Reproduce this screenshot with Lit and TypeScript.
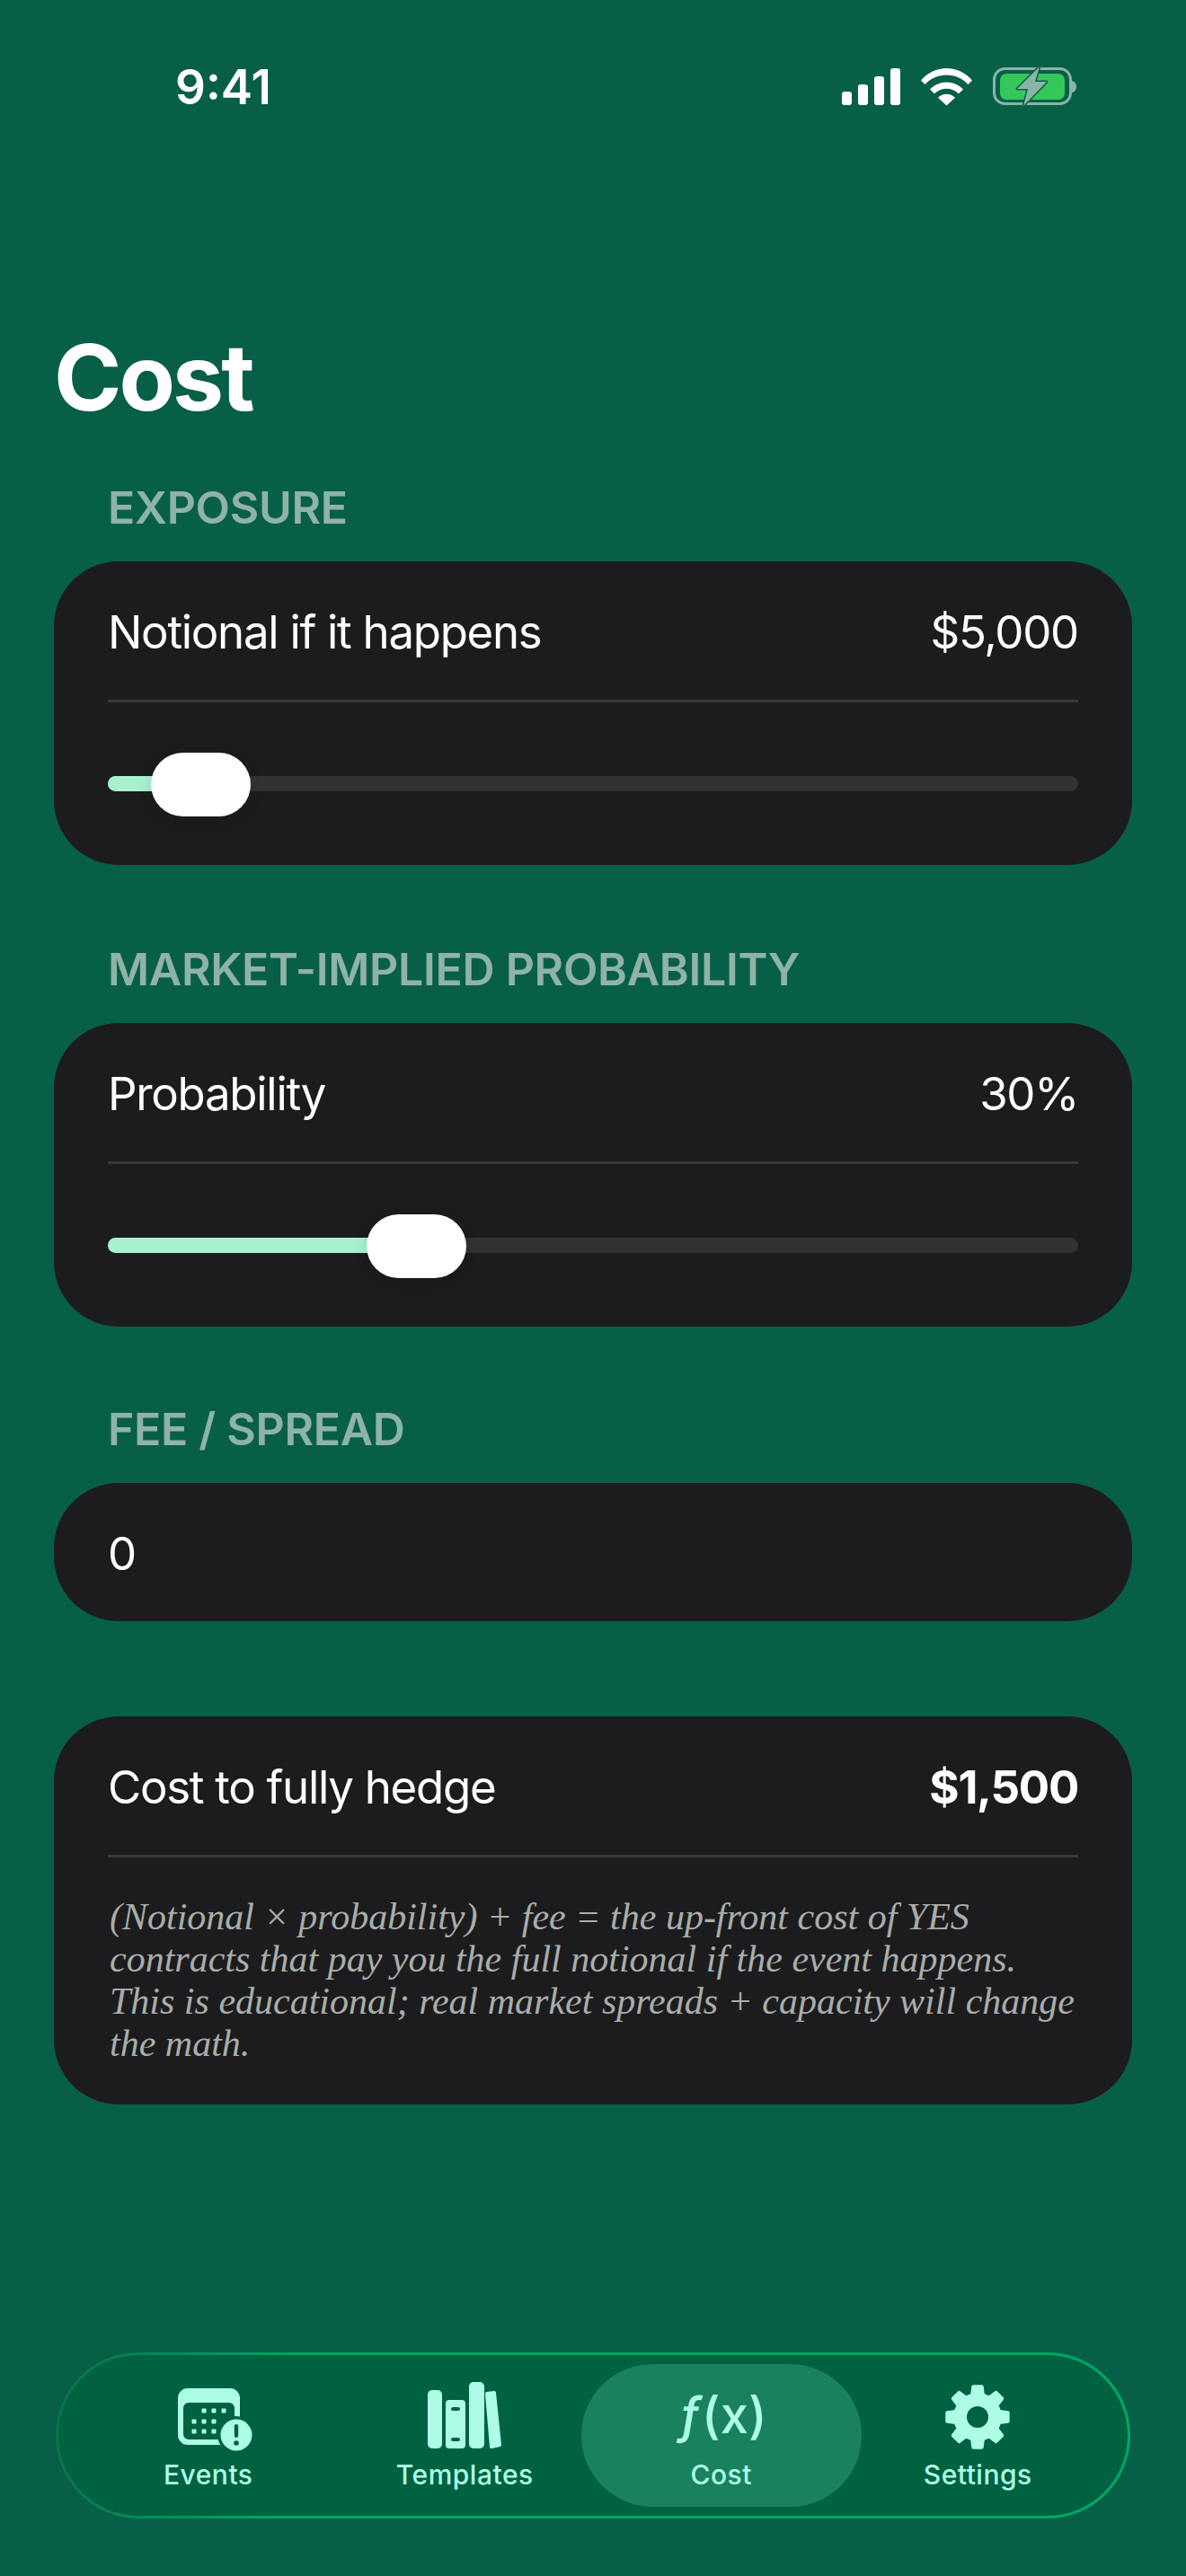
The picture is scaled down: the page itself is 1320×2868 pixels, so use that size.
import { LitElement, html, css, svg } from 'lit';
import { customElement, property } from 'lit/decorators.js';

const SANS = css`Inter, "Liberation Sans", sans-serif`;

// 8 tooth gear, points go round the wheel
function gearPoints(): string {
  const pts: string[] = [];
  const cx = 38;
  const cy = 38;
  for (let i = 0; i < 8; i++) {
    const a = (i * Math.PI) / 4 - Math.PI / 2;
    const at = (r: number, off: number) =>
      `${(cx + r * Math.cos(a + off)).toFixed(1)},${(cy + r * Math.sin(a + off)).toFixed(1)}`;
    pts.push(at(25, -0.24), at(34, -0.14), at(34, 0.14), at(25, 0.24));
  }
  return pts.join(' ');
}

@customElement('cost-slider')
export class CostSlider extends LitElement {
  @property({ type: Number }) value = 0;

  static styles = css`
    :host {
      display: block;
      height: 181px;
      position: relative;
    }
    .track {
      position: absolute;
      left: 0;
      right: 0;
      top: 82px;
      height: 17px;
      border-radius: 9px;
      background: #323234;
      overflow: hidden;
    }
    .fill {
      height: 100%;
      background: #a8f1cf;
    }
    .thumb {
      position: absolute;
      top: 56px;
      width: 111px;
      height: 71px;
      border-radius: 36px;
      background: #fff;
      box-shadow: 0 4px 16px rgba(0, 0, 0, 0.12);
    }
  `;

  render() {
    const left = this.value * 960;
    return html`
      <div class="track"><div class="fill" style="width:${left + 40}px"></div></div>
      <div class="thumb" style="left:${left}px"></div>
    `;
  }
}

@customElement('app-root')
export class AppRoot extends LitElement {
  static styles = css`
    :host {
      display: block;
      height: 2868px;
      background: #085f48;
      color: #fff;
      font-family: ${SANS};
    }
    .page {
      height: 2868px;
      display: flex;
      flex-direction: column;
      box-sizing: border-box;
    }
    .status {
      height: 345px;
      flex: none;
      box-sizing: border-box;
      padding: 71px 122px 0 195px;
      display: flex;
      justify-content: space-between;
      align-items: flex-start;
    }
    .time {
      font-size: 53px;
      font-weight: 600;
      line-height: 52px;
    }
    .status svg {
      display: block;
      margin-top: 4px;
    }
    h1 {
      margin: 0;
      padding-left: 60px;
      font-size: 102px;
      font-weight: 700;
      line-height: 150px;
      height: 148px;
      letter-spacing: -3px;
    }
    .content {
      padding: 0 60px;
      display: flex;
      flex-direction: column;
    }
    .label {
      padding-left: 60px;
      font-size: 50px;
      font-weight: 600;
      line-height: 58px;
      letter-spacing: -0.3px;
      margin-top: 43px;
      margin-bottom: 31px;
      color: #8fb3a9;
    }
    .label.next {
      margin-top: 85px;
    }
    .label.second {
      margin-top: 87px;
    }
    .card {
      background: #1c1c1e;
      border-radius: 72px;
      padding: 0 60px;
    }
    .card.gap {
      margin-top: 106px;
    }
    .row {
      height: 151px;
      padding-top: 3px;
      display: flex;
      justify-content: space-between;
      align-items: center;
      font-size: 51px;
      line-height: 62px;
      letter-spacing: -1.3px;
    }
    .row.sep {
      border-bottom: 3px solid #38383a;
    }
    .row b {
      font-weight: 700;
    }
    .note {
      margin: 0;
      padding: 43px 0 44px 2px;
      font-family: "Liberation Serif", serif;
      font-style: italic;
      font-size: 42px;
      line-height: 47px;
      color: #a9aeaa;
    }
    nav {
      margin: auto 62px 64px;
      height: 185px;
      box-sizing: border-box;
      padding: 10px 24px;
      border: 3px solid transparent;
      border-radius: 93px;
      background:
        linear-gradient(#006241, #006241) padding-box,
        linear-gradient(100deg, #0a6f4e 0%, #00a862 22%, #00a862 100%) border-box;
      display: grid;
      grid-template-columns: repeat(4, 1fr);
    }
    .tab {
      position: relative;
      color: #adfde6;
      display: flex;
      flex-direction: column;
      align-items: center;
    }
    .tab.active::before {
      content: '';
      position: absolute;
      inset: 0 -13px;
      border-radius: 80px;
      background: #1a815f;
    }
    .icon {
      position: relative;
      height: 95px;
      display: flex;
      align-items: flex-end;
      justify-content: center;
    }
    .tab svg {
      display: block;
    }
    .events-icon {
      margin-left: 15px;
      margin-bottom: -2px;
    }
    .settings-icon {
      margin-bottom: -2px;
    }
    .fx {
      font-size: 56px;
      line-height: 64px;
      height: 70px;
      font-weight: 500;
      margin-left: 4px;
    }
    .fx i {
      font-style: italic;
      margin-right: 2px;
    }
    .name {
      position: relative;
      font-size: 30px;
      font-weight: 500;
      line-height: 36px;
      letter-spacing: 0.5px;
      margin-top: 10px;
    }
  `;

  private statusIcons() {
    return html`<svg width="261" height="43" viewBox="0 0 261 43" fill="#fff">
      <rect x="0" y="27" width="11" height="15" rx="3" />
      <rect x="18" y="19" width="11" height="23" rx="3" />
      <rect x="36" y="10" width="11" height="32" rx="3" />
      <rect x="54" y="1" width="11" height="41" rx="3" />
      <path d="M88 14.5C95 6 106 1 116.5 1s21.500 5 28.500 13.500l-4.500 4.500C134.500 12.500 125.500 8.500 116.500 8.500S98.500 12.500 92.500 19z" />
      <path d="M98 24.500c4.500-5 11.500-8 18.500-8s14 3 18.500 8l-5 4.800c-3.500-3.500-8.500-5.500-13.500-5.500s-10 2-13.500 5.500z" />
      <path d="M107 33.800c2.500-2.500 6-4 9.500-4s7 1.500 9.500 4L116.500 42.500z" />
      <rect x="169.500" y="1.500" width="85" height="39" rx="12" fill="none" stroke="#8bb3a6" stroke-width="3" />
      <path d="M256 15c3 .5 5 3 5 6.500s-2 6-5 6.500z" fill="#8bb3a6" />
      <rect x="176" y="7" width="72" height="29" rx="7" fill="#34c759" />
      <path d="M220 -1L195 24h12l-5 19 26-27h-13z" fill="#8bb3a6" stroke="#085f48" stroke-width="3" stroke-linejoin="round" paint-order="stroke" />
    </svg>`;
  }

  private eventsIcon() {
    const dots = [
      [29, 25], [40, 25], [51, 25],
      [18, 37], [29, 37], [40, 37],
      [18, 48], [29, 48], [40, 48],
    ];
    return html`<svg class="events-icon" width="83" height="70" viewBox="0 0 83 70">
      <rect x="0" y="0" width="69" height="63" rx="11" fill="#adfde6" />
      <rect x="6" y="16" width="57" height="41" rx="6" fill="#006241" />
      ${dots.map(([x, y]) => svg`<rect x=${x - 2.5} y=${y - 2.5} width="5" height="5" rx="1" fill="#adfde6" />`)}
      <circle cx="65" cy="52" r="21" fill="#006241" />
      <circle cx="65" cy="52" r="17.500" fill="#adfde6" />
      <rect x="62.800" y="40" width="4.400" height="15" rx="2.200" fill="#006241" />
      <circle cx="65" cy="61" r="2.800" fill="#006241" />
    </svg>`;
  }

  private templatesIcon() {
    return html`<svg width="83" height="75" viewBox="0 0 83 75" fill="#adfde6">
      <rect x="0" y="9" width="16" height="65" rx="5" />
      <rect x="20" y="20" width="22" height="54" rx="4" />
      <rect x="26" y="28" width="10" height="4" rx="2" fill="#006241" />
      <rect x="26" y="62" width="10" height="4" rx="2" fill="#006241" />
      <rect x="46" y="0" width="17" height="74" rx="5" />
      <polygon points="66,13 74,12 80,70 71,72" stroke="#adfde6" stroke-width="4" stroke-linejoin="round" />
    </svg>`;
  }

  private settingsIcon() {
    return html`<svg class="settings-icon" width="76" height="76" viewBox="0 0 76 76">
      <polygon points=${gearPoints()} fill="#adfde6" stroke="#adfde6" stroke-width="4" stroke-linejoin="round" />
      <circle cx="38" cy="38" r="12" fill="#006241" />
    </svg>`;
  }

  render() {
    return html`
      <div class="page">
        <div class="status">
          <span class="time">9:41</span>
          ${this.statusIcons()}
        </div>
        <h1>Cost</h1>
        <div class="content">
          <div class="label">EXPOSURE</div>
          <div class="card">
            <div class="row sep"><span>Notional if it happens</span><span>$5,000</span></div>
            <cost-slider .value=${0.05}></cost-slider>
          </div>
          <div class="label second">MARKET-IMPLIED PROBABILITY</div>
          <div class="card">
            <div class="row sep"><span>Probability</span><span>30%</span></div>
            <cost-slider .value=${0.3}></cost-slider>
          </div>
          <div class="label next">FEE / SPREAD</div>
          <div class="card">
            <div class="row"><span>0</span></div>
          </div>
          <div class="card gap">
            <div class="row sep"><span>Cost to fully hedge</span><b>$1,500</b></div>
            <p class="note">(Notional × probability) + fee = the up-front cost of YES contracts that pay you the full notional if the event happens. This is educational; real market spreads + capacity will change the math.</p>
          </div>
        </div>
        <nav>
          <div class="tab">
            <div class="icon">${this.eventsIcon()}</div>
            <span class="name">Events</span>
          </div>
          <div class="tab">
            <div class="icon">${this.templatesIcon()}</div>
            <span class="name">Templates</span>
          </div>
          <div class="tab active">
            <div class="icon"><span class="fx"><i>ƒ</i>(x)</span></div>
            <span class="name">Cost</span>
          </div>
          <div class="tab">
            <div class="icon">${this.settingsIcon()}</div>
            <span class="name">Settings</span>
          </div>
        </nav>
      </div>
    `;
  }
}
